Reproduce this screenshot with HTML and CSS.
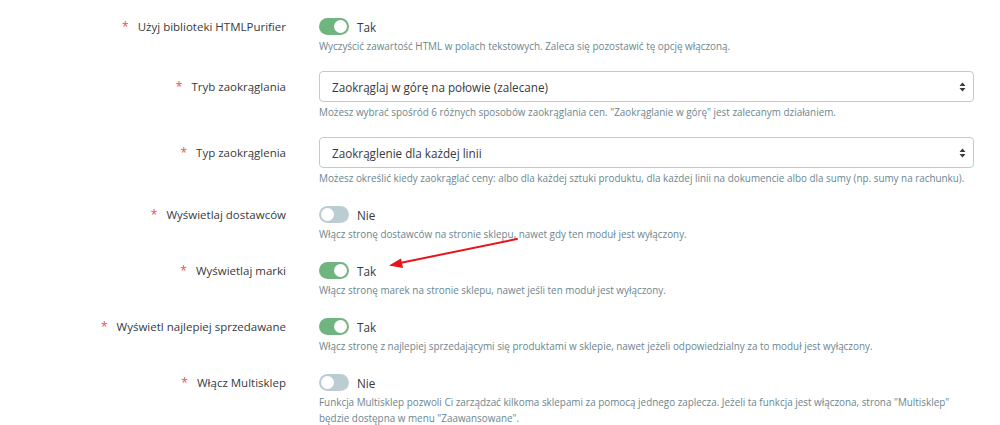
FILE: index.html
```html
<!DOCTYPE html>
<html lang="pl">
<head>
<meta charset="utf-8">
<link rel="stylesheet" href="styles.css">
</head>
<body>
<div class="form">
  <div class="row toggle-row">
    <label class="label"><span class="req">*</span>Użyj biblioteki HTMLPurifier</label>
    <div class="control switch-line"><span class="switch on"><span class="knob"></span></span><span class="state">Tak</span></div>
    <div class="help">Wyczyścić zawartość HTML w polach tekstowych. Zaleca się pozostawić tę opcję włączoną.</div>
  </div>
  <div class="row select-row">
    <label class="label"><span class="req">*</span>Tryb zaokrąglania</label>
    <div class="control select">
      <span>Zaokrąglaj w górę na połowie (zalecane)</span>
      <svg class="caret" width="7" height="10" viewBox="0 0 7 10"><path d="M3.5 0.5 L6.5 4 L0.5 4 Z M3.5 9.5 L6.5 6 L0.5 6 Z" fill="#363a41"/></svg>
    </div>
    <div class="help">Możesz wybrać spośród 6 różnych sposobów zaokrąglania cen. "Zaokrąglanie w górę" jest zalecanym działaniem.</div>
  </div>
  <div class="row select-row">
    <label class="label"><span class="req">*</span>Typ zaokrąglenia</label>
    <div class="control select">
      <span>Zaokrąglenie dla każdej linii</span>
      <svg class="caret" width="7" height="10" viewBox="0 0 7 10"><path d="M3.5 0.5 L6.5 4 L0.5 4 Z M3.5 9.5 L6.5 6 L0.5 6 Z" fill="#363a41"/></svg>
    </div>
    <div class="help">Możesz określić kiedy zaokrąglać ceny: albo dla każdej sztuki produktu, dla każdej linii na dokumencie albo dla sumy (np. sumy na rachunku).</div>
  </div>
  <div class="row toggle-row">
    <label class="label"><span class="req">*</span>Wyświetlaj dostawców</label>
    <div class="control switch-line"><span class="switch off"><span class="knob"></span></span><span class="state">Nie</span></div>
    <div class="help">Włącz stronę dostawców na stronie sklepu, nawet gdy ten moduł jest wyłączony.</div>
  </div>
  <div class="row toggle-row">
    <label class="label"><span class="req">*</span>Wyświetlaj marki</label>
    <div class="control switch-line"><span class="switch on"><span class="knob"></span></span><span class="state">Tak</span></div>
    <div class="help">Włącz stronę marek na stronie sklepu, nawet jeśli ten moduł jest wyłączony.</div>
  </div>
  <div class="row toggle-row">
    <label class="label"><span class="req">*</span>Wyświetl najlepiej sprzedawane</label>
    <div class="control switch-line"><span class="switch on"><span class="knob"></span></span><span class="state">Tak</span></div>
    <div class="help">Włącz stronę z najlepiej sprzedającymi się produktami w sklepie, nawet jeżeli odpowiedzialny za to moduł jest wyłączony.</div>
  </div>
  <div class="row toggle-row">
    <label class="label"><span class="req">*</span>Włącz Multisklep</label>
    <div class="control switch-line"><span class="switch off"><span class="knob"></span></span><span class="state">Nie</span></div>
    <div class="help">Funkcja Multisklep pozwoli Ci zarządzać kilkoma sklepami za pomocą jednego zaplecza. Jeżeli ta funkcja jest włączona, strona "Multisklep"<br>będzie dostępna w menu "Zaawansowane".</div>
  </div>
</div>
<svg class="annot" width="1000" height="425" viewBox="0 0 1000 425">
  <line x1="517" y1="239" x2="400" y2="263" stroke="#e8141b" stroke-width="2" stroke-linecap="round"/>
  <path d="M389 265.5 L401 258.5 L403 268 Z" fill="#e8141b"/>
</svg>
</body>
</html>
```

FILE: styles.css
```css
html, body {
  margin: 0;
  padding: 0;
  background: #fff;
}
body {
  font-family: "Open Sans", "Noto Sans", sans-serif;
  color: #363a41;
  width: 1000px;
  height: 425px;
  overflow: hidden;
  position: relative;
}
.form {
  padding: 15px 26px 0 0;
}
.row {
  display: grid;
  grid-template-columns: 286px 1fr;
  column-gap: 33px;
  margin-bottom: 17px;
}
.label {
  grid-column: 1;
  grid-row: 1;
  align-self: center;
  display: flex;
  justify-content: flex-end;
  align-items: center;
  gap: 9px;
  font-size: 11.5px;
  line-height: 16px;
  color: #363a41;
}
.req {
  color: #f54c3e;
  font-size: 12px;
}
.control {
  grid-column: 2;
  grid-row: 1;
}
.help {
  grid-column: 2;
  grid-row: 2;
  font-size: 9.9px;
  line-height: 16px;
  color: #6c868e;
}
.toggle-row .help {
  margin-top: 0;
}
.select-row .help {
  margin-top: 2px;
}
.switch-line {
  display: flex;
  align-items: center;
  gap: 8px;
  height: 23px;
}
.switch {
  width: 30px;
  height: 17px;
  border-radius: 9px;
  display: flex;
  align-items: center;
  padding: 0 2px;
  box-sizing: border-box;
}
.switch.on {
  background: #70b580;
  justify-content: flex-end;
}
.switch.off {
  background: #bbcdd2;
  justify-content: flex-start;
}
.knob {
  width: 13px;
  height: 13px;
  border-radius: 50%;
  background: #fff;
}
.state {
  font-size: 11.7px;
  line-height: 16px;
}
.select {
  height: 31px;
  border: 1px solid #bbcdd2;
  border-radius: 4px;
  box-sizing: border-box;
  display: flex;
  align-items: center;
  justify-content: space-between;
  padding: 0 7px 0 12px;
  font-size: 11.7px;
}
.annot {
  position: absolute;
  left: 0;
  top: 0;
  pointer-events: none;
}
```
